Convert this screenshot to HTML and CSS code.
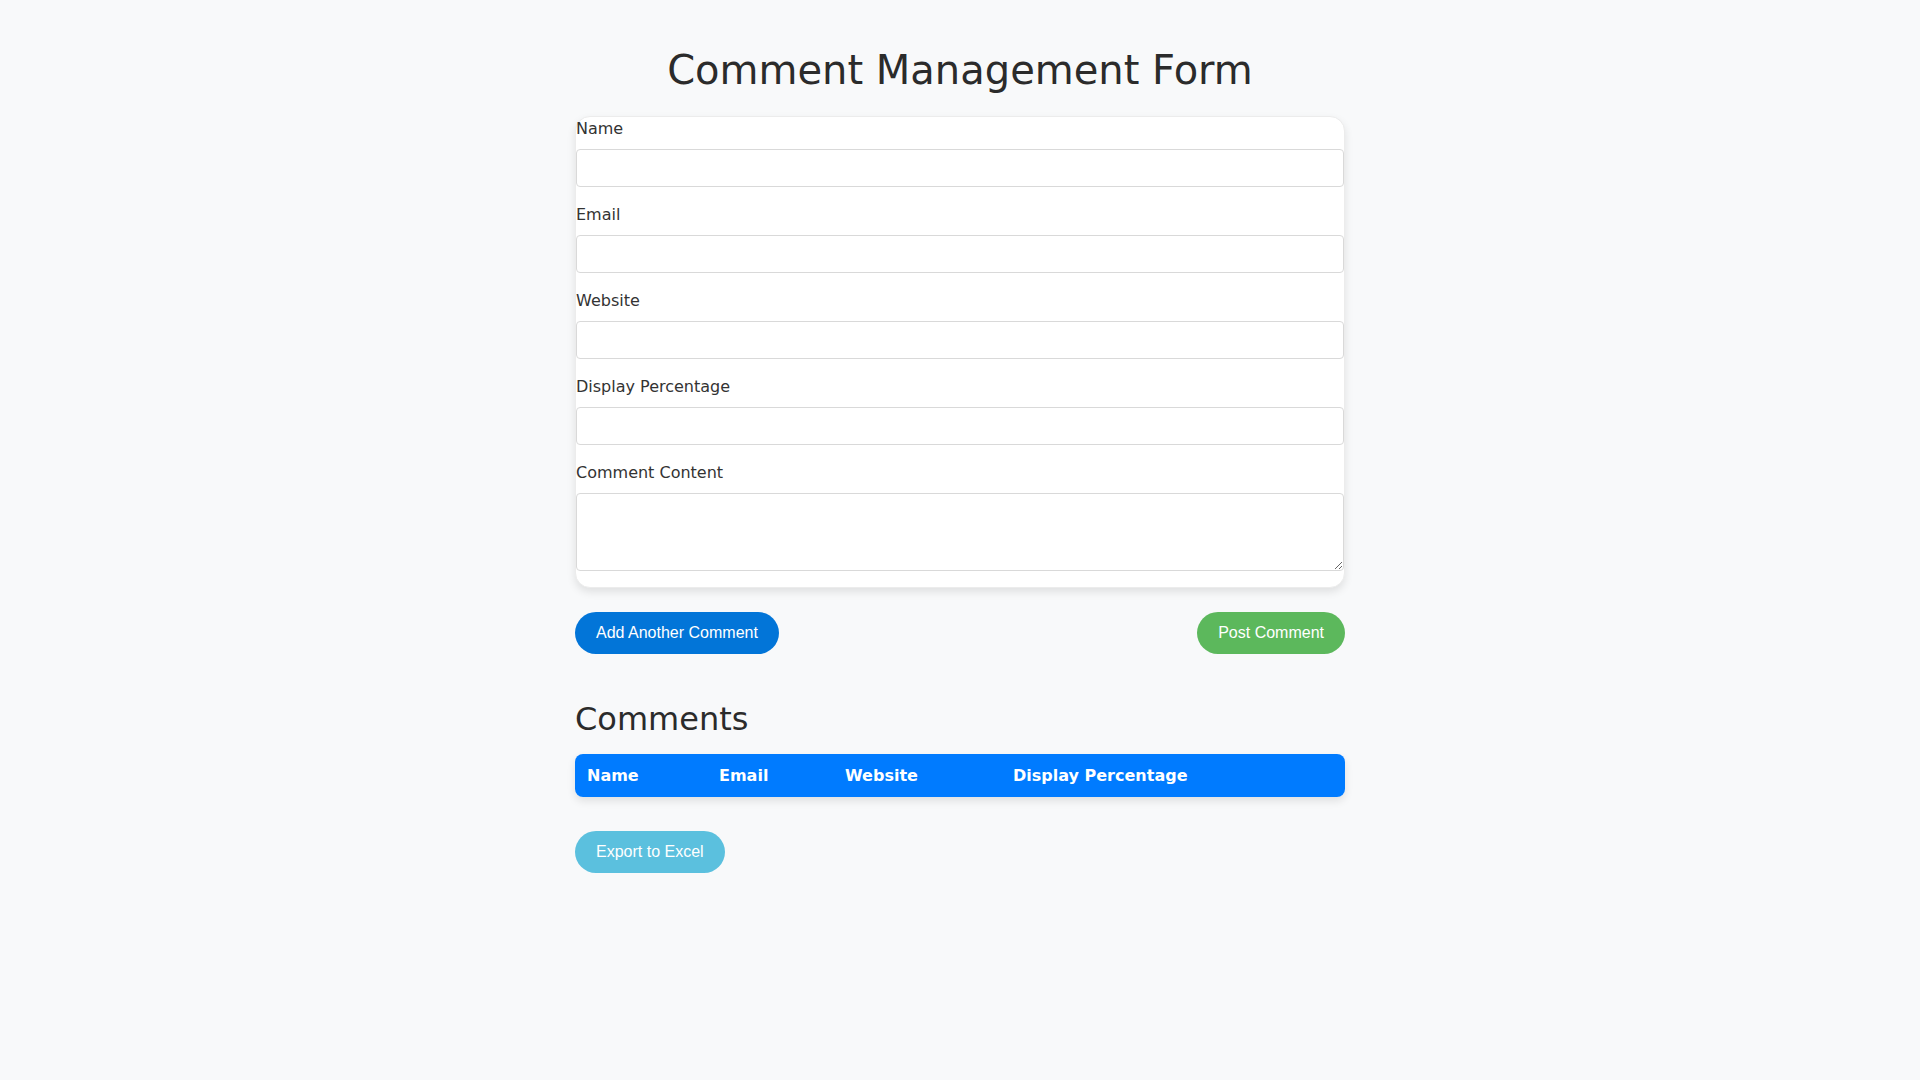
FILE: index.html
```html
<!DOCTYPE html>
<html lang="en">
<head>
<meta charset="utf-8">
<title>Comment Management Form</title>
<link rel="stylesheet" href="styles.css">
</head>
<body>
<div class="container">
  <h1 class="title">Comment Management Form</h1>
  <form class="card">
    <div class="group">
      <label class="label" for="name">Name</label>
      <input class="field" id="name" type="text">
    </div>
    <div class="group">
      <label class="label" for="email">Email</label>
      <input class="field" id="email" type="email">
    </div>
    <div class="group">
      <label class="label" for="website">Website</label>
      <input class="field" id="website" type="text">
    </div>
    <div class="group">
      <label class="label" for="pct">Display Percentage</label>
      <input class="field" id="pct" type="text">
    </div>
    <div class="group">
      <label class="label" for="content">Comment Content</label>
      <textarea class="field area" id="content"></textarea>
    </div>
  </form>
  <div class="actions">
    <button class="btn btn-primary" type="button">Add Another Comment</button>
    <button class="btn btn-success" type="button">Post Comment</button>
  </div>
  <h2 class="subtitle">Comments</h2>
  <div class="table-wrap">
    <table class="table">
      <thead>
        <tr>
          <th class="col-name">Name</th>
          <th class="col-email">Email</th>
          <th class="col-web">Website</th>
          <th class="col-pct">Display Percentage</th>
        </tr>
      </thead>
      <tbody></tbody>
    </table>
  </div>
  <button class="btn btn-info" type="button">Export to Excel</button>
</div>
</body>
</html>
```
FILE: styles.css
```css
* { box-sizing: border-box; }

body {
  margin: 0;
  background: #f8f9fa;
  color: #333;
  font-family: "DejaVu Sans", sans-serif;
  font-size: 16px;
  line-height: 1.5;
}

.container {
  max-width: 770px;
  margin: 0 auto;
  padding-top: 46px;
}

.title {
  margin: 0 0 22px;
  font-size: 40px;
  font-weight: normal;
  line-height: 48px;
  text-align: center;
  color: #2b2b2b;
}

.card {
  background: #fff;
  border: 1px solid #ececec;
  border-radius: 15px;
  box-shadow: 0 4px 8px rgba(0, 0, 0, 0.1);
}

.group {
  margin-bottom: 16px;
}

.label {
  display: block;
  line-height: 24px;
  margin-bottom: 8px;
  color: #333;
}

.field {
  display: block;
  width: 100%;
  height: 38px;
  border: 1px solid #d9d9d9;
  border-radius: 4px;
  background: #fff;
  font: inherit;
  padding: 6px 12px;
  margin: 0;
}

.area {
  height: 78px;
  resize: vertical;
}

.actions {
  display: flex;
  justify-content: space-between;
  margin-top: 24px;
}

.btn {
  display: inline-block;
  border: none;
  border-radius: 21px;
  padding: 12px 21px;
  font-family: "Liberation Sans", Arial, sans-serif;
  font-size: 16px;
  line-height: 18px;
  height: 42px;
  color: #fff;
  cursor: pointer;
}

.btn-primary { background: #0275d8; }
.btn-success { background: #5cb85c; }
.btn-info { background: #5bc0de; }

.subtitle {
  margin: 46px 0 16px;
  font-size: 32px;
  font-weight: normal;
  line-height: 38px;
  color: #2b2b2b;
}

.table-wrap {
  border-radius: 8px;
  overflow: hidden;
  box-shadow: 0 4px 8px rgba(0, 0, 0, 0.1);
  margin-bottom: 34px;
}

.table {
  width: 100%;
  border-collapse: collapse;
}

.table th {
  background: #007bff;
  color: #fff;
  font-weight: bold;
  text-align: left;
  padding: 10px 12px;
  line-height: 23px;
}

.col-name { width: 132px; }
.col-email { width: 126px; }
.col-web { width: 168px; }
```
